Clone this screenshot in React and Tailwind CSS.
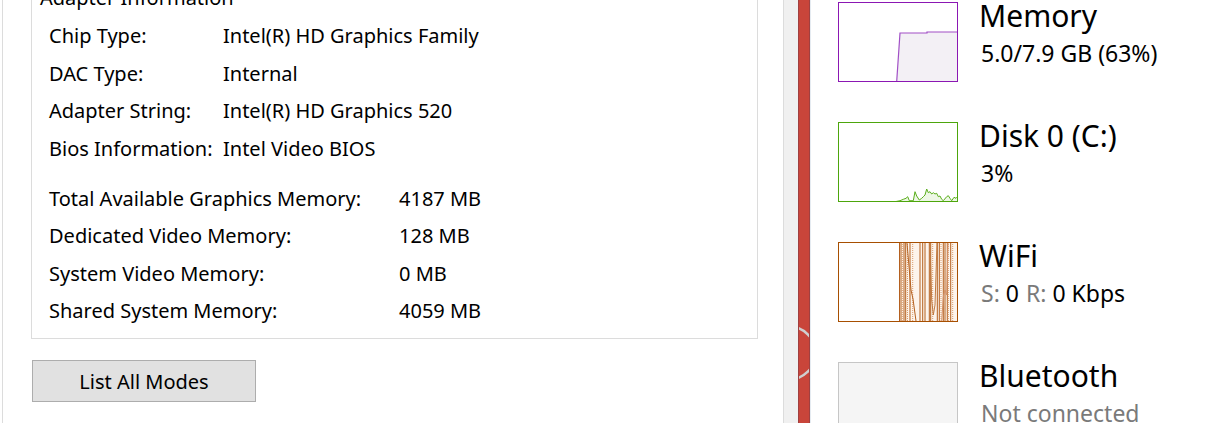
import React from "react";

const leftRows1 = [
  ["Chip Type:", "Intel(R) HD Graphics Family"],
  ["DAC Type:", "Internal"],
  ["Adapter String:", "Intel(R) HD Graphics 520"],
  ["Bios Information:", "Intel Video BIOS"],
];
const leftRows2 = [
  ["Total Available Graphics Memory:", "4187 MB"],
  ["Dedicated Video Memory:", "128 MB"],
  ["System Video Memory:", "0 MB"],
  ["Shared System Memory:", "4059 MB"],
];

const diskPts = [
  [58, 79.5], [62, 78.7], [65.3, 77.3], [68, 76.3], [69.7, 74.7], [71.3, 78.7], [75.3, 78.7], [77, 69.7],
  [78.7, 74], [81.3, 78], [83.7, 76.3], [85.3, 74.7], [87, 73], [88.7, 67], [90.3, 70.7], [92, 69.7],
  [93.7, 72], [95.3, 70.7], [97, 72], [98.7, 71.3], [100.3, 74.7], [102, 74], [103.7, 77.3], [105.3, 78.7],
  [108.7, 74.7], [110.3, 73.7], [112, 76.3], [113.7, 78.7], [116, 75.3], [118, 76.3], [119.5, 74.7],
];

const wifiSolid = [61.5, 63, 66, 67.7, 72, 82, 84.7, 87, 91.3, 92.7, 99.3, 101.3, 105.3, 107, 109.3, 112.7];
const wifiDotted = [64.3, 69.5, 74.7, 94.7, 103, 110.3, 114.7];

function MemoryGraph() {
  return (
    <svg width="120" height="80" viewBox="0 0 120 80" className="block">
      <polygon points="58.7,79.5 62,31 89,31 89,30 119.5,30 119.5,79.5" fill="#f3f0f5" />
      <polyline points="58.7,79.5 62,31 89,31 89,30 119.5,30" fill="none" stroke="#a14fc6" strokeWidth="1.2" />
      <rect x="0.5" y="0.5" width="119" height="79" fill="none" stroke="#8b17b3" strokeWidth="1" />
    </svg>
  );
}

function DiskGraph() {
  const pts = diskPts.map((p) => p.join(",")).join(" ");
  return (
    <svg width="120" height="80" viewBox="0 0 120 80" className="block">
      <polygon points={`${pts} 119.5,79.5`} fill="#eef7e6" />
      <polyline points={pts} fill="none" stroke="#5aae1c" strokeWidth="1" />
      <rect x="0.5" y="0.5" width="119" height="79" fill="none" stroke="#4da60c" strokeWidth="1" />
    </svg>
  );
}

function WifiGraph() {
  return (
    <svg width="120" height="80" viewBox="0 0 120 80" className="block">
      <polygon points="61,0 119.5,0 119.5,79.5 61,79.5" fill="#fdf4ec" />
      {wifiSolid.map((x) => (
        <line key={"s" + x} x1={x} y1="0" x2={x} y2="80" stroke="#b4601f" strokeWidth="1" />
      ))}
      {wifiDotted.map((x) => (
        <line key={"d" + x} x1={x} y1="0" x2={x} y2="80" stroke="#d99a6a" strokeWidth="1" strokeDasharray="1 1" />
      ))}
      <polyline points="69,1 73,48 75,57 78,79" fill="none" stroke="#b4601f" strokeWidth="1" />
      <polyline points="92,1 93.7,58 95.3,73 97,63 99,1" fill="none" stroke="#c07a40" strokeWidth="1" />
      <polyline points="103.7,79 105.3,55 107,48 108.7,53 110,1" fill="none" stroke="#d5936a" strokeWidth="1" />
      <rect x="0.5" y="0.5" width="119" height="79" fill="none" stroke="#a74f01" strokeWidth="1" />
    </svg>
  );
}

function BluetoothGraph() {
  return <div className="h-[80px] w-[120px] border border-[#c6c6c6] bg-[#f5f5f5]" />;
}

function PerfRow({ graph, title, sub }) {
  return (
    <div className="flex h-[120px] shrink-0 gap-[21px]">
      <div className="shrink-0">{graph}</div>
      <div className="flex flex-col">
        <div className="-mt-[3px] text-[30px] leading-[34px] whitespace-nowrap text-black">{title}</div>
        <div className="mt-[7px] pl-[2px] text-[23px] leading-[27px] whitespace-nowrap">{sub}</div>
      </div>
    </div>
  );
}

export default function App() {
  return (
    <div className="flex h-[423px] w-[1217px] overflow-hidden bg-white text-black font-['Segoe_UI','Noto_Sans',sans-serif]">
      {/* left dialog panel */}
      <div className="ml-[2px] h-full w-[782px] shrink-0 border-x border-[#dcdcdc] pl-[28px]">
        <div className="flex h-[339px] w-[727px] flex-col border-x border-b border-[#dcdcdc] text-[20px]">
          <div className="-mt-[16px] pl-[8px] leading-[27px] whitespace-nowrap">Adapter Information</div>
          <div className="mt-[6px] pl-[17px]">
            {leftRows1.map(([k, v]) => (
              <div key={k} className="flex leading-[37.5px] whitespace-nowrap">
                <div className="w-[174px] shrink-0">{k}</div>
                <div>{v}</div>
              </div>
            ))}
          </div>
          <div className="mt-[12.5px] pl-[17px]">
            {leftRows2.map(([k, v]) => (
              <div key={k} className="flex leading-[37.5px] whitespace-nowrap">
                <div className="w-[350px] shrink-0">{k}</div>
                <div>{v}</div>
              </div>
            ))}
          </div>
        </div>
        <button className="ml-[1px] mt-[21px] flex h-[42px] w-[224px] items-center justify-center border border-[#adadad] bg-[#e1e1e1] text-[20px] leading-[27px]">
          List All Modes
        </button>
      </div>

      {/* splitter */}
      <div className="h-full w-[14px] shrink-0 bg-[#f0f0f0]" />
      <div className="relative h-full w-[12px] shrink-0 overflow-hidden border-x border-[#a04040] bg-[#c9453a]">
        <svg width="12" height="423" className="absolute left-[-1px] top-0">
          <circle cx="-9" cy="353" r="26.5" fill="none" stroke="#cfcfcf" strokeWidth="2.5" />
        </svg>
      </div>
      <div className="h-full w-px shrink-0 bg-[#e5ebf1]" />

      {/* performance list */}
      <div className="flex flex-col pl-[27px] pt-[2px]">
        <PerfRow graph={<MemoryGraph />} title="Memory" sub="5.0/7.9 GB (63%)" />
        <PerfRow graph={<DiskGraph />} title="Disk 0 (C:)" sub="3%" />
        <PerfRow
          graph={<WifiGraph />}
          title="WiFi"
          sub={
            <span>
              <span className="text-[#7a7a7a]">S:</span> 0<span className="ml-[7px] text-[#7a7a7a]">R:</span> 0 Kbps
            </span>
          }
        />
        <PerfRow graph={<BluetoothGraph />} title="Bluetooth" sub={<span className="text-[#7a7a7a]">Not connected</span>} />
      </div>
    </div>
  );
}
